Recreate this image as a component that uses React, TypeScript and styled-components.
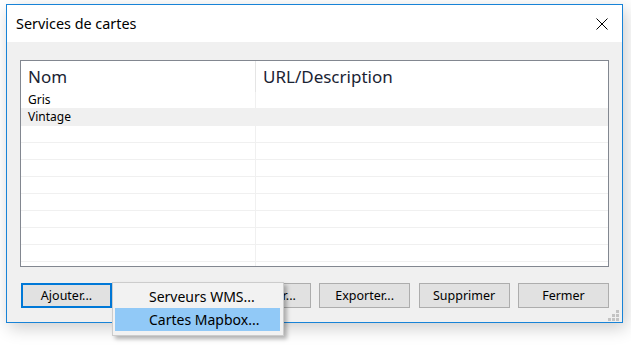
import React from "react";
import styled, { createGlobalStyle } from "styled-components";

const Global = createGlobalStyle`
  html, body { margin: 0; padding: 0; background: #ffffff; }
  body { font-family: "Noto Sans", "Open Sans", sans-serif; color: #000; }
  * { box-sizing: border-box; }
`;

const Page = styled.div`
  width: 631px;
  height: 345px;
  padding: 4px 0 0 6px;
  overflow: hidden;
`;

const Window = styled.div`
  position: relative;
  width: 617px;
  height: 319px;
  border: 1px solid #1883d7;
  display: flex;
  flex-direction: column;
  box-shadow: 3px 5px 16px rgba(0, 0, 0, 0.2);
  background: #f0f0f0;
`;

const TitleBar = styled.div`
  height: 37px;
  background: #ffffff;
  display: flex;
  align-items: center;
  justify-content: space-between;
  padding: 0 14px 0 9px;
`;

const Title = styled.span`
  font-size: 14.4px;
  color: #000;
`;

const CloseIcon = styled.svg`
  display: block;
  width: 12px;
  height: 12px;
`;

const Body = styled.div`
  flex: 1;
  display: flex;
  flex-direction: column;
  padding: 18px 13px 13px 13px;
`;

const ListView = styled.div`
  height: 207px;
  border: 1px solid #828790;
  background: #ffffff;
  overflow: hidden;
`;

const HeaderRow = styled.div`
  display: grid;
  grid-template-columns: 235px 1fr;
  height: 31px;
`;

const HeaderCell = styled.div<{ $divider?: boolean }>`
  display: flex;
  align-items: center;
  padding-left: 7px;
  font-size: 17px;
  color: #1a2333;
  border-right: ${(p) => (p.$divider ? "1px solid #e5e5e5" : "none")};
`;

const Row = styled.div<{ $selected?: boolean }>`
  display: grid;
  grid-template-columns: 235px 1fr;
  height: 17px;
  border-bottom: 1px solid #f0f0f0;
  background: ${(p) => (p.$selected ? "#f0f0f0" : "#ffffff")};
`;

const Cell = styled.div<{ $divider?: boolean }>`
  display: flex;
  align-items: center;
  padding-left: 7px;
  font-size: 12px;
  line-height: 16px;
  color: #000;
  border-right: ${(p) => (p.$divider ? "1px solid #f0f0f0" : "none")};
`;

const ButtonBar = styled.div`
  margin-top: 16px;
  padding-left: 1px;
  display: flex;
  justify-content: space-between;
`;

const Button = styled.button<{ $focused?: boolean }>`
  width: 91px;
  height: 25px;
  padding: 0;
  background: #e1e1e1;
  border: ${(p) => (p.$focused ? "2px solid #0078d7" : "1px solid #adadad")};
  font-family: "Noto Sans", "Open Sans", sans-serif;
  font-size: 12.5px;
  color: #000;
  display: flex;
  align-items: center;
  justify-content: center;
`;

const Menu = styled.div`
  position: absolute;
  left: 105px;
  top: 277px;
  width: 172px;
  height: 54px;
  background: #f2f2f2;
  border: 1px solid #cccccc;
  padding: 2px 3px 2px 2px;
  box-shadow: 3px 3px 4px rgba(0, 0, 0, 0.28);
  display: flex;
  flex-direction: column;
`;

const MenuItem = styled.div<{ $active?: boolean }>`
  height: 23px;
  display: flex;
  align-items: center;
  padding-left: 34px;
  font-size: 14px;
  color: #000;
  background: ${(p) => (p.$active ? "#91c9f7" : "transparent")};
`;

const Grip = styled.svg`
  position: absolute;
  right: 3px;
  bottom: 1px;
  width: 11px;
  height: 11px;
`;

const emptyRows = Array.from({ length: 9 });

export default function App() {
  return (
    <>
      <Global />
      <Page>
        <Window>
          <TitleBar>
            <Title>Services de cartes</Title>
            <CloseIcon viewBox="0 0 12 12">
              <path d="M0.5 0.5 L11.5 11.5 M11.5 0.5 L0.5 11.5" stroke="#000" strokeWidth="1" fill="none" />
            </CloseIcon>
          </TitleBar>
          <Body>
            <ListView>
              <HeaderRow>
                <HeaderCell $divider>Nom</HeaderCell>
                <HeaderCell>URL/Description</HeaderCell>
              </HeaderRow>
              <Row>
                <Cell $divider>Gris</Cell>
                <Cell />
              </Row>
              <Row $selected>
                <Cell>Vintage</Cell>
                <Cell />
              </Row>
              {emptyRows.map((_, i) => (
                <Row key={i}>
                  <Cell $divider />
                  <Cell />
                </Row>
              ))}
            </ListView>
            <ButtonBar>
              <Button $focused>Ajouter...</Button>
              <Button>Modifier...</Button>
              <Button>Importer...</Button>
              <Button>Exporter...</Button>
              <Button>Supprimer</Button>
              <Button>Fermer</Button>
            </ButtonBar>
          </Body>
          <Menu>
            <MenuItem>Serveurs WMS...</MenuItem>
            <MenuItem $active>Cartes Mapbox...</MenuItem>
          </Menu>
          <Grip viewBox="0 0 11 11">
            <rect x="8" y="0" width="3" height="3" fill="#c3c3c3" />
            <rect x="4" y="4" width="3" height="3" fill="#c3c3c3" />
            <rect x="8" y="4" width="3" height="3" fill="#c3c3c3" />
            <rect x="0" y="8" width="3" height="3" fill="#c3c3c3" />
            <rect x="4" y="8" width="3" height="3" fill="#c3c3c3" />
            <rect x="8" y="8" width="3" height="3" fill="#c3c3c3" />
          </Grip>
        </Window>
      </Page>
    </>
  );
}
